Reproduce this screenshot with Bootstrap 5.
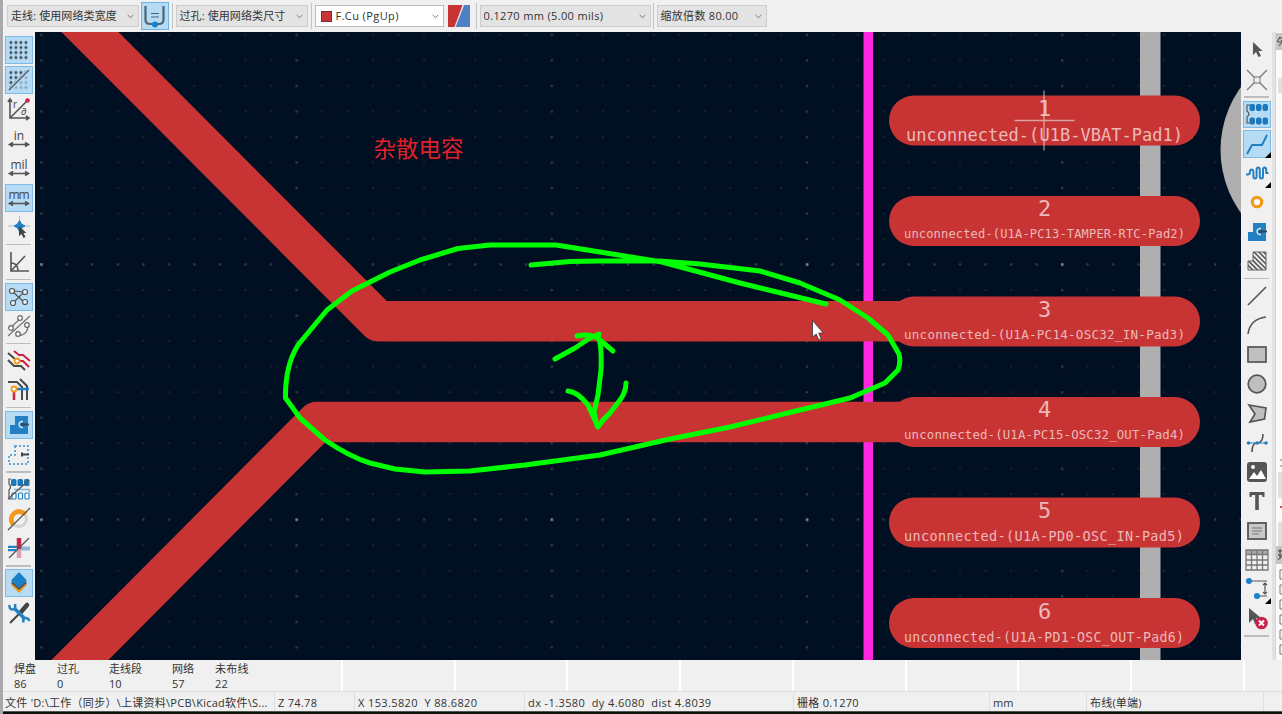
<!DOCTYPE html>
<html lang="zh-CN">
<head>
<meta charset="utf-8">
<meta name="viewport" content="width=device-width, initial-scale=1">
<title>PCB 编辑器</title>
<link rel="stylesheet" href="https://cdn.jsdelivr.net/npm/bootstrap@5.3.0/dist/css/bootstrap.min.css">
<style>
html,body{height:100%;overflow:hidden}
body{font-family:"Open Sans","Noto Sans CJK SC",sans-serif;font-size:11px;line-height:1.2;color:#333;background:#f0f0f0}
.app{height:714px;width:1282px;border-left:3px solid #a9a9ad}
.topbar{height:32px;padding-left:4px}
.combo{height:22px;background:#e3e3e3;border:1px solid #cdcdcd;padding:0 4px 0 3px;white-space:nowrap;letter-spacing:.1px}
.combo.pick{background:#fff;border-color:#bbb}
.combo .cv{width:7px;height:5px;flex:none}
.vsep{width:1px;height:26px;background:#c4c4c4}
.swatch{width:11px;height:11px;background:#c83434;border:1px solid #7d2b2b}
.topbtn{width:28px;height:28px;background:#b5dbf5;border:1px solid #6fb3e3}
.mid{height:628px}
.tools{width:32px;padding-top:3.25px;padding-left:2px}
.tools.rt{width:31px;padding-top:3.8px}
.tool{height:29.5px;width:28px;flex:none}
.rt .tool{height:29.35px}
.tool>svg{width:24px;height:24px}
.tool.on{background:#b5dbf5;box-shadow:inset 0 0 0 1px #7dbbe6;height:28px;margin:.75px 0}
.rt .tool.on{height:27.85px}
.hsep{height:1.3px;margin:2px 1px;background:#bdbdbd;flex:none;width:25px}
.board{width:1206px;height:628px;background:#000f22;flex:none}
.side{width:7px;background:#fafafa;border-left:1px solid #d5d5d5;overflow:hidden}
.gut{width:3px;background:#e2e2e2}
.info{height:31px;padding:1px 0 0 11px;line-height:15px;background:repeating-linear-gradient(90deg,#fff 0 2px,#f0f0f0 2px 112.7px) 338px 0 no-repeat #f0f0f0}
.status{height:20px;border-top:1px solid #dcdcdc;white-space:nowrap}
.status>div{border-right:1px solid #dedede;padding-left:3px;padding-top:4px;flex:none;overflow:hidden}
.foot{height:3px;background:#07130b;border-top:1px solid #555}
.k{fill:none;stroke:#555;stroke-width:1.6}
.b{fill:none;stroke:#2380c3;stroke-width:2}
.g{fill:none;stroke:#777;stroke-width:1.3}
.thin{stroke-width:1.2}
svg text{font-family:"Open Sans",sans-serif}
.board svg .net{font-family:"DejaVu Sans Mono",monospace;fill:#ecb9b9}
.board svg .note{font-family:"Noto Sans CJK SC",sans-serif;fill:#e3202a}
</style>
<script src="https://cdn.jsdelivr.net/npm/bootstrap@5.3.0/dist/js/bootstrap.bundle.min.js"></script>
</head>
<body>
<svg width="0" height="0" class="position-absolute"><defs>
<symbol id="cv" viewBox="0 0 7 5"><path d="M.7 1l2.8 2.700L6.300 1" fill="none" stroke="#777" stroke-width="1"/></symbol>
<symbol id="corner" viewBox="0 0 6 6"><path d="M6 0v6H0z"/></symbol>
<pattern id="dt" width="5" height="5" patternUnits="userSpaceOnUse" x="1.9" y="2.5"><circle cx="2" cy="2" r="1.5" fill="#3a4650"/></pattern>
<pattern id="hatch" width="3.4" height="3.4" patternUnits="userSpaceOnUse" patternTransform="rotate(-45)"><path d="M.8 0v3.400" stroke="#4a4a4a" stroke-width="1.500"/></pattern>
<pattern id="gd" width="25.52" height="25.52" patternUnits="userSpaceOnUse" x="-6.7" y="-10"><rect x="12" y="12" width="2" height="1.600" fill="#1c2835"/></pattern>
<pattern id="gM" width="255.2" height="255.2" patternUnits="userSpaceOnUse" x="133.9" y="104.4"><rect x="126.600" y="126.900" width="2.400" height="2.400" fill="#78848e"/></pattern>
<pattern id="gR" width="25.52" height="255.2" patternUnits="userSpaceOnUse" x="-6.7" y="104.4"><rect x="12" y="127" width="2" height="2" fill="#323e4a"/></pattern>
<pattern id="gC" width="255.2" height="25.52" patternUnits="userSpaceOnUse" x="133.9" y="-10"><rect x="126.800" y="12" width="2" height="2" fill="#323e4a"/></pattern>
<symbol id="zone" viewBox="0 0 24 24"><path d="M8 3h13v18H3v-9h5z" fill="#2380c3"/><path d="M16 8.500q-4 0-4 3t4 3" fill="none" stroke="#d5ebfa" stroke-width="1.300"/><path d="M15 11.500h7" stroke="#3a4650" stroke-width="1.800"/><circle cx="16" cy="11.500" r="1.800" fill="#3a4650"/></symbol>
</defs></svg>
<div class="app d-flex flex-column">
  <div class="topbar d-flex align-items-center flex-shrink-0">
    <div class="combo d-flex align-items-center justify-content-between" style="width:132px"><span>走线: 使用网络类宽度</span><svg class="cv"><use href="#cv"/></svg></div>
    <div class="topbtn d-flex align-items-center justify-content-center" style="margin-left:1.5px"><svg width="26" height="26" viewBox="0 0 26 26"><path d="M3.500 3v14q0 4 5 4h8q5 0 5-4V3" fill="none" stroke="#4d6474" stroke-width="2.200"/><path d="M9 10.500h8M9 14h8" stroke="#4d6474" stroke-width="1.200"/><circle cx="13" cy="21.500" r="3" fill="#1681cc"/></svg></div>
    <div class="vsep" style="margin:0 3px"></div>
    <div class="combo d-flex align-items-center justify-content-between" style="width:132px"><span>过孔: 使用网络类尺寸</span><svg class="cv"><use href="#cv"/></svg></div>
    <div class="vsep" style="margin:0 3px"></div>
    <div class="combo pick d-flex align-items-center" style="width:129px;padding-left:5px"><span class="swatch me-1"></span><span style="letter-spacing:.4px">F.Cu (PgUp)</span><svg class="cv ms-auto"><use href="#cv"/></svg></div>
    <svg width="22" height="22" viewBox="0 0 22 22" style="margin-left:4.500px"><path d="M0 0h14.500L7 22H0z" fill="#c83434"/><path d="M15.500 0H22v22H7z" fill="#4d7fc4"/><path d="M15.500 0L7 22" stroke="#ddd" stroke-width="1.300"/></svg>
    <div class="vsep" style="margin:0 3px 0 5.500px"></div>
    <div class="combo d-flex align-items-center justify-content-between" style="width:171px"><span style="letter-spacing:.35px">0.1270 mm (5.00 mils)</span><svg class="cv"><use href="#cv"/></svg></div>
    <div class="vsep" style="margin:0 3px 0 2px"></div>
    <div class="combo d-flex align-items-center justify-content-between" style="width:110px"><span style="letter-spacing:.3px">缩放倍数 80.00</span><svg class="cv"><use href="#cv"/></svg></div>
  </div>

  <div class="mid d-flex flex-shrink-0">
    <div class="tools d-flex flex-column flex-shrink-0">
      <div class="tool on d-flex align-items-center justify-content-center"><svg viewBox="0 0 24 24"><rect x="2" y="2" width="20" height="20" fill="url(#dt)"/></svg></div>
      <div class="tool on d-flex align-items-center justify-content-center"><svg viewBox="0 0 24 24"><path d="M2 2h18L2 20z" fill="url(#dt)"/><path d="M22 5v17H5z" fill="url(#dt)" opacity=".35"/><path class="k thin" d="M2 22L22 2"/></svg></div>
      <div class="tool d-flex align-items-center justify-content-center"><svg viewBox="0 0 24 24"><path class="k" d="M3 3v18h18M3 21L20 4M1 5l2-3 2 3M19 19l3 2-3 2"/><circle cx="20.500" cy="3.500" r="2.300" fill="#c8234b"/><text x="6" y="11" font-size="10" fill="#444">r</text><text x="14" y="18" font-size="10" fill="#444">∂</text></svg></div>
      <div class="tool d-flex align-items-center justify-content-center"><svg viewBox="0 0 24 24"><text x="12" y="12.500" font-size="12" text-anchor="middle" fill="#444">in</text><path class="k" d="M3 17.500h18M6 15.500l-3.500 2L6 19.500M18 15.500l3.500 2-3.500 2"/></svg></div>
      <div class="tool d-flex align-items-center justify-content-center"><svg viewBox="0 0 24 24"><text x="12" y="12.500" font-size="12" text-anchor="middle" fill="#444">mil</text><path class="k" d="M3 17.500h18M6 15.500l-3.500 2L6 19.500M18 15.500l3.500 2-3.500 2"/></svg></div>
      <div class="tool on d-flex align-items-center justify-content-center"><svg viewBox="0 0 24 24"><text x="12" y="12.500" font-size="12" text-anchor="middle" fill="#444" textLength="21">mm</text><path class="k" d="M3 17.500h18M6 15.500l-3.500 2L6 19.500M18 15.500l3.500 2-3.500 2"/></svg></div>
      <div class="tool d-flex align-items-center justify-content-center"><svg viewBox="0 0 24 24"><path d="M12.500 1v20M1 11h22" stroke="#bbb"/><path d="M12.500 5.500l2 3.500 3.500 2-3.500 2-2 3.500-2-3.500L7 11l3.500-2z" fill="#2380c3" stroke="#2380c3"/><path d="M12 11v10l2.500-2 2 4 2-1-2-4h3z" fill="#444"/></svg></div>
      <div class="hsep"></div>
      <div class="tool d-flex align-items-center justify-content-center"><svg viewBox="0 0 24 24"><path class="k" d="M4 2v19h18M4 21L18 6M4 13q7 0 7 8"/></svg></div>
      <div class="hsep"></div>
      <div class="tool on d-flex align-items-center justify-content-center"><svg viewBox="0 0 24 24"><path class="k thin" d="M5 6l13 12M6 18L16 8l5-1M7 6l10 1"/><g fill="#e9f5fd" stroke="#555" stroke-width="1.200"><circle cx="5" cy="6" r="2.500"/><circle cx="18" cy="7" r="2.500"/><circle cx="6" cy="18" r="2.500"/><circle cx="18" cy="17" r="2.500"/></g></svg></div>
      <div class="tool d-flex align-items-center justify-content-center"><svg viewBox="0 0 24 24"><path class="g" d="M1 22L23 2M4 13l9-8M11 21h4q6-2 6-10"/><g fill="#fff" stroke="#666" stroke-width="1.200"><circle cx="4" cy="14" r="2.300"/><circle cx="13" cy="4" r="2.300"/><circle cx="11" cy="20" r="2.300"/><circle cx="20" cy="11" r="2.300"/></g></svg></div>
      <div class="hsep"></div>
      <div class="tool d-flex align-items-center justify-content-center"><svg viewBox="0 0 24 24"><g fill="none" stroke-width="2"><path d="M7 2l5 4h4l7 6M12 12h4l6 6" stroke="#c8234b"/><path d="M1 4l7 6M1 11l6 6h7l4 4" stroke="#4a4a4a"/></g><circle cx="10" cy="12" r="2.500" fill="#fff" stroke="#f39a1b" stroke-width="1.800"/></svg></div>
      <div class="tool d-flex align-items-center justify-content-center"><svg viewBox="0 0 24 24"><g fill="none" stroke-width="2"><path d="M1 4h9l5 5v13M13 1l7 7v14" stroke="#4a4a4a"/><path d="M7 11h15" stroke="#2380c3" stroke-width="2.500"/><path d="M7 11v11" stroke="#c8234b" stroke-width="2.500"/></g><circle cx="7" cy="11" r="2.500" fill="#fff" stroke="#f39a1b" stroke-width="1.800"/></svg></div>
      <div class="hsep"></div>
      <div class="tool on d-flex align-items-center justify-content-center"><svg><use href="#zone"/></svg></div>
      <div class="tool d-flex align-items-center justify-content-center"><svg viewBox="0 0 24 24"><path d="M8 3h13v18H2v-9h6z" fill="none" stroke="#3b8fc8" stroke-width="1.500" stroke-dasharray="2 2"/><path d="M15 11.500h7M15 9.500v4" stroke="#444" stroke-width="2"/></svg></div>
      <div class="hsep"></div>
      <div class="tool d-flex align-items-center justify-content-center"><svg viewBox="0 0 24 24"><path class="k thin" d="M4 2H2v5q3 3 0 6v9h3"/><g fill="#1d78bb"><rect x="4" y="2" width="5.500" height="7" rx="1.500"/><rect x="10.500" y="2" width="5.500" height="7" rx="1.500"/><rect x="17" y="2" width="5.500" height="7" rx="1.500"/></g><path d="M7 12.500h15.500v3" fill="none" stroke="#7fb4d9" stroke-width="1.500"/><g fill="#fff" stroke="#2380c3" stroke-width="1.200"><rect x="5" y="16" width="4" height="6" rx="1"/><rect x="11.500" y="16" width="4" height="6" rx="1"/><rect x="18" y="16" width="4" height="6" rx="1"/></g><path class="k thin" d="M1 22L22 3"/></svg></div>
      <div class="tool d-flex align-items-center justify-content-center"><svg viewBox="0 0 24 24"><circle cx="12" cy="12" r="7.500" fill="none" stroke="#d2d2d2" stroke-width="3"/><path d="M6 17.500A7.500 7.500 0 0 1 18.500 7.500" fill="none" stroke="#f39a1b" stroke-width="4.800"/><path class="k thin" d="M1 23L23 1"/></svg></div>
      <div class="tool d-flex align-items-center justify-content-center"><svg viewBox="0 0 24 24"><path d="M1 10.800h11M1 14.200h11" stroke="#2380c3" stroke-width="2.200"/><path d="M12 12.500h11" stroke="#8db8da" stroke-width="4"/><path d="M12 2v11" stroke="#c8234b" stroke-width="4.500"/><path d="M12 13v9" stroke="#dba0ad" stroke-width="4.500"/><path class="k thin" d="M2 22L22 2"/></svg></div>
      <div class="hsep"></div>
      <div class="tool on d-flex align-items-center justify-content-center"><svg viewBox="0 0 24 24"><path d="M12 6l8 8-8 8-8-8z" fill="#f39a1b"/><path d="M12 4l8 8-8 7-8-7z" fill="#555"/><path d="M12 1l8 8.500-8 7.500-8-7.500z" fill="#1c80c6"/></svg></div>
      <div class="tool d-flex align-items-center justify-content-center"><svg viewBox="0 0 24 24"><path d="M3 22L14 11" stroke="#444" stroke-width="2"/><path d="M14 11l6-7" stroke="#444" stroke-width="4.500" stroke-linecap="round"/><path d="M7 7l11 11" stroke="#2380c3" stroke-width="3.500"/><path d="M2.500 4q-.5 4.500 3 4.500T8 3M16.500 21.500q-1-4.500 2-4.500t4 3" fill="none" stroke="#2380c3" stroke-width="2.500"/></svg></div>
    </div>

    <div class="board"><svg width="1206" height="628" viewBox="35 32 1206 628" class="d-block">
      <g transform="translate(35 32)"><rect width="1206" height="628" fill="url(#gd)"/><rect width="1206" height="628" fill="url(#gR)"/><rect width="1206" height="628" fill="url(#gC)"/><rect width="1206" height="628" fill="url(#gM)"/></g>
      <path d="M1140 32h20.500v628H1140z" fill="#afafaf"/><circle cx="1327.500" cy="150" r="107" fill="#afafaf"/>
      <path d="M863.500 32h9.500v628h-9.500z" fill="#ff28e0"/>
      <g fill="none" stroke="#c83434" stroke-width="40.400" stroke-linejoin="round" stroke-linecap="round"><path d="M60 2L378.500 321.300H915M51 689L317 422H915"/></g>
      <g fill="#c83434"><rect x="889" y="95.500" width="311" height="50" rx="25"/><rect x="889" y="196" width="311" height="50" rx="25"/><rect x="889" y="296.500" width="311" height="50" rx="25"/><rect x="889" y="397" width="311" height="50" rx="25"/><rect x="889" y="497.500" width="311" height="50" rx="25"/><rect x="889" y="598" width="311" height="50" rx="25"/></g>
      <g font-size="22" text-anchor="middle"><text class="net" x="1044.500" y="115.500">1</text><text class="net" x="1044.500" y="216">2</text><text class="net" x="1044.500" y="317">3</text><text class="net" x="1044.500" y="417">4</text><text class="net" x="1044.500" y="518">5</text><text class="net" x="1044.500" y="618.500">6</text></g>
      <g font-size="12.600"><text class="net" x="906" y="140.500" font-size="17" textLength="277">unconnected-(U1B-VBAT-Pad1)</text><text class="net" x="904" y="237.500" font-size="12" textLength="281">unconnected-(U1A-PC13-TAMPER-RTC-Pad2)</text><text class="net" x="904" y="339" textLength="281" font-size="12.600">unconnected-(U1A-PC14-OSC32_IN-Pad3)</text><text class="net" x="904" y="439" textLength="281" font-size="12.400">unconnected-(U1A-PC15-OSC32_OUT-Pad4)</text><text class="net" x="904" y="541" textLength="280" font-size="13.500">unconnected-(U1A-PD0-OSC_IN-Pad5)</text><text class="net" x="904" y="641.500" textLength="280" font-size="13.200">unconnected-(U1A-PD1-OSC_OUT-Pad6)</text></g>
      <path d="M1014.500 120.500h60M1044 90.500v60" stroke="#e5dada" stroke-opacity=".65" stroke-width="1.300"/>
      <text class="note" x="373.500" y="157" font-size="22.500">杂散电容</text>
      <g fill="none" stroke="#0f0" stroke-width="5" stroke-linecap="round" stroke-linejoin="round">
        <path d="M826 304L740 283 662 262 600 252 556 245H490L458 248.500 420 260 390 272 352 291 327 310 298 345Q285 366 285.500 398L300 418 325 440Q350 457 370 463L395 469 425 472 470 471 525 465 600 455 670 439 730 427 800 410 850 398 885 383 898 370Q901 362 899 354L888 335 868 318 840 300 800 283 760 271 700 264 660 261H600L570 261.500 531 265"/>
        <path d="M598 336Q602 345 601 370L598 395 594 412 597 426M555 359L575 348 590 338 599 334M577 336Q592 333 600 340L613 351M568 391Q578 392 588 405L593 416 598 427Q603 419 610 413L620 400Q626 392 626 383"/>
      </g>
      <path d="M812.500 320.500v16.500l3.700-3 2.600 6 2.400-1-2.500-6h4.600z" fill="#fff" stroke="#333" stroke-width=".8"/>
    </svg></div>

    <div class="tools rt d-flex flex-column flex-shrink-0">
      <div class="tool d-flex align-items-center justify-content-center"><svg viewBox="0 0 24 24"><path d="M8 4v13l3-3 2.500 5 2.500-1-2.500-5h4z" fill="#555"/></svg></div>
      <div class="tool d-flex align-items-center justify-content-center"><svg viewBox="0 0 24 24"><path class="g" d="M2 2l20 20M22 2L2 22"/><rect x="9" y="9" width="6" height="6" fill="#f0f0f0" stroke="#777"/></svg></div>
      <div class="hsep"></div>
      <div class="tool on d-flex align-items-center justify-content-center"><svg viewBox="0 0 24 24"><path class="k thin" d="M5 3H2v6q4 3 0 6v6h3"/><g fill="#1d78bb"><rect x="4.500" y="2" width="5.500" height="7" rx="2"/><rect x="11" y="2" width="5.500" height="7" rx="2"/><rect x="17.500" y="2" width="5.500" height="7" rx="2"/><rect x="4.500" y="15.500" width="5.500" height="7" rx="2"/><rect x="11" y="15.500" width="5.500" height="7" rx="2"/><rect x="17.500" y="15.500" width="5.500" height="7" rx="2"/></g></svg></div>
      <div class="tool on position-relative d-flex align-items-center justify-content-center"><svg viewBox="0 0 24 24"><path class="b" d="M2 22l5-9h10l5-10"/></svg><svg class="position-absolute bottom-0 end-0" style="width:6px;height:6px"><use href="#corner"/></svg></div>
      <div class="tool position-relative d-flex align-items-center justify-content-center"><svg viewBox="0 0 24 24"><path class="b" d="M1 13.500h1.500Q5 13.500 5 11t1.700-2.500T8.400 11v4q0 2.500 1.600 2.500t1.600-2.500V9q0-2.500 1.600-2.500T14.800 9v6q0 2.500 1.600 2.500T18 15V9q0-2.500 1.600-2.500T21.200 9v3h2.300"/></svg><svg class="position-absolute bottom-0 end-0" style="width:6px;height:6px"><use href="#corner"/></svg></div>
      <div class="tool d-flex align-items-center justify-content-center"><svg viewBox="0 0 24 24"><circle cx="12" cy="12" r="4.700" fill="#fff" stroke="#f39a1b" stroke-width="3.200"/></svg></div>
      <div class="tool d-flex align-items-center justify-content-center"><svg><use href="#zone"/></svg></div>
      <div class="tool d-flex align-items-center justify-content-center"><svg viewBox="0 0 24 24"><path d="M8 3h13v18H3v-9h5z" fill="url(#hatch)" stroke="#666"/></svg></div>
      <div class="hsep"></div>
      <div class="tool d-flex align-items-center justify-content-center"><svg viewBox="0 0 24 24"><path class="k" d="M3 21L21 3"/></svg></div>
      <div class="tool d-flex align-items-center justify-content-center"><svg viewBox="0 0 24 24"><path class="k" d="M3 21Q5 6 21 4"/></svg></div>
      <div class="tool d-flex align-items-center justify-content-center"><svg viewBox="0 0 24 24"><rect x="3" y="4" width="18" height="15" fill="#bfbfbf" stroke="#555" stroke-width="1.700"/></svg></div>
      <div class="tool d-flex align-items-center justify-content-center"><svg viewBox="0 0 24 24"><circle cx="12" cy="12" r="8.800" fill="#bfbfbf" stroke="#555" stroke-width="1.700"/></svg></div>
      <div class="tool d-flex align-items-center justify-content-center"><svg viewBox="0 0 24 24"><path d="M4 4l17 3-1.500 11L5 21l5-8z" fill="#bfbfbf" stroke="#555" stroke-width="1.700"/></svg></div>
      <div class="tool d-flex align-items-center justify-content-center"><svg viewBox="0 0 24 24"><path class="k" d="M7 21q0-9 5-9 6 0 6-9"/><path d="M2 12h20" stroke="#2380c3"/><g fill="#2380c3"><circle cx="3.500" cy="12" r="1.800"/><circle cx="12" cy="12" r="1.800"/><circle cx="21" cy="12" r="1.800"/></g></svg></div>
      <div class="tool d-flex align-items-center justify-content-center"><svg viewBox="0 0 24 24"><rect x="2" y="2" width="20" height="20" rx="3" fill="#555"/><path d="M4 19l5-7 3 4 4-6 5 9z" fill="#fff"/><circle cx="8" cy="7" r="2" fill="#fff"/></svg></div>
      <div class="tool d-flex align-items-center justify-content-center"><svg viewBox="0 0 24 24"><path d="M4.500 3h15v5h-2L17 6h-3.200v15h-3.600V6H7l-.5 2h-2z" fill="#555"/></svg></div>
      <div class="tool d-flex align-items-center justify-content-center"><svg viewBox="0 0 24 24"><rect x="3" y="4" width="18" height="16" fill="#c8c8c8" stroke="#555" stroke-width="1.800"/><path d="M7 9h10M7 12h10M7 15h7" stroke="#777" stroke-width="1.200"/></svg></div>
      <div class="tool d-flex align-items-center justify-content-center"><svg viewBox="0 0 24 24"><path d="M1 2h22v4H1z" fill="#aaa"/><path class="g" d="M1 2h22v20H1zM1 6.500h22M1 12h22M1 17h22M6.500 2v20M12 2v20M17.500 2v20"/></svg></div>
      <div class="tool position-relative d-flex align-items-center justify-content-center"><svg viewBox="0 0 24 24"><path class="k thin" d="M4 4h18M12 19h10M20 6v11M18 8l2-2 2 2M18 15l2 2 2-2"/><circle cx="4" cy="4" r="3" fill="#1681cc"/><circle cx="12" cy="19" r="3" fill="#1681cc"/></svg><svg class="position-absolute bottom-0 end-0" style="width:6px;height:6px"><use href="#corner"/></svg></div>
      <div class="tool d-flex align-items-center justify-content-center"><svg viewBox="0 0 24 24"><path d="M4 1v15l4-4 2 5 3-1-2-5h5z" fill="#555"/><circle cx="16.500" cy="16" r="6.300" fill="#c8234b"/><path d="M14 13.500l5 5M19 13.500l-5 5" stroke="#fff" stroke-width="1.800"/></svg></div>
      <div class="hsep"></div>
    </div>
    <div class="gut flex-shrink-0"></div>
    <div class="side flex-shrink-0"><svg width="6" height="628" viewBox="0 0 6 628"><path d="M0 1h6v17H0z" fill="#c4c4c4"/><path d="M4 5l-3 5M3 6h3M2 10q3 1 4-2M3 14l3-4" stroke="#444" fill="none"/><path d="M2 46h4v15H2zM2 440h4v26H2zM2 490h4v24H2z" fill="#e0e0e0"/><path d="M4 428h2M4 434h2" stroke="#777"/><path d="M4 475h2" stroke="#c55" stroke-width="2"/><path d="M0 514h6v18H0z" fill="#c4c4c4"/><path d="M2 519h4M4 517v10M2 523h4M2 528l4-4" stroke="#444"/><path d="M6 538H4v9h2M6 553H4v9h2M6 568H4v9h2M6 583H4v9h2M6 598H4v9h2M6 613H4v9h2" fill="none" stroke="#777"/></svg></div>
  </div>

  <div class="info d-flex flex-shrink-0">
    <div style="width:43px">焊盘<br>86</div><div style="width:52px">过孔<br>0</div><div style="width:63px">走线段<br>10</div><div style="width:43px">网络<br>57</div><div style="letter-spacing:.3px">未布线<br>22</div>
  </div>
  <div class="status d-flex flex-shrink-0">
    <div style="width:272px;padding-left:2px;letter-spacing:.27px">文件 'D:\工作（同步）\上课资料\PCB\Kicad软件\S...</div><div style="width:80px;letter-spacing:.3px">Z 74.78</div><div style="width:170px;letter-spacing:.38px">X 153.5820&nbsp; Y 88.6820</div><div style="width:269px;letter-spacing:.4px">dx -1.3580&nbsp; dy 4.6080&nbsp; dist 4.8039</div><div style="width:196px;letter-spacing:.3px">栅格 0.1270</div><div style="width:97px">mm</div><div style="width:177px;letter-spacing:.2px">布线(单端)</div>
  </div>
  <div class="foot flex-shrink-0"></div>
</div>
</body>
</html>
